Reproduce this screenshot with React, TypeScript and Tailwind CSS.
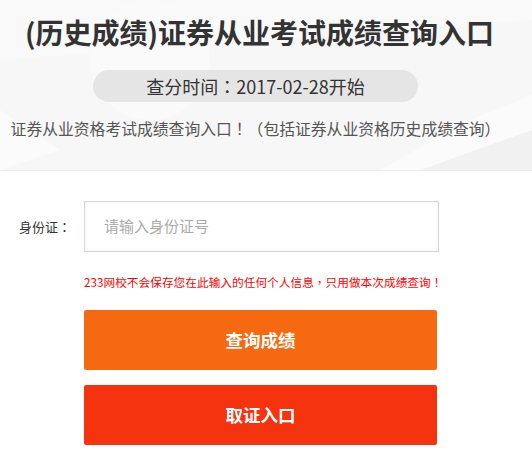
import React from "react";

const font = '"Noto Sans CJK SC", "Noto Sans", sans-serif';
const tc = '"Noto Sans CJK TC", "Noto Sans CJK SC", sans-serif';
const kr = '"Noto Sans CJK KR", "Noto Sans CJK SC", sans-serif';

function P({ c }: { c: string }) {
  return <span style={{ fontFamily: tc }}>{c}</span>;
}
function K({ c }: { c: string }) {
  return <span style={{ fontFamily: kr }}>{c}</span>;
}

export default function App() {
  return (
    <div className="w-[532px] h-[456px] bg-white overflow-hidden" style={{ fontFamily: font }}>
      <div className="relative h-[171px] bg-[#f7f7f7] border-b border-[#ebebeb] overflow-hidden">
        <svg className="absolute inset-0" width="532" height="170" viewBox="0 0 532 170">
          <polygon points="0,110 60,150 0,170" fill="#fbfbfb" />
          <polygon points="0,0 532,0 532,20 0,60" fill="#f9f9f9" />
          <circle cx="150" cy="60" r="60" fill="#fafafa" />
          <polygon points="420,170 532,130 532,170" fill="#f1f1f1" />
          <polygon points="380,170 470,120 532,95 532,130 420,170" fill="#fbfbfb" />
        </svg>
        <div className="relative w-[511px] flex flex-col items-center pt-[13px]">
          <h1 className="pl-[8px] text-[28px] leading-[38px] font-bold text-[#333] whitespace-nowrap">(历史成绩)证券从业考试成绩查询入口</h1>
          <div className="mt-[19px] w-[325px] h-[32px] rounded-full bg-[#e5e5e5] flex items-center justify-center text-[18px] text-[#333]">
            查分时间<P c="：" />2017-02-28开始
          </div>
          <p className="mt-[15px] text-[15.8px] leading-[24px] text-[#555] whitespace-nowrap">
            证券从业资格考试成绩查询入口<P c="！" /><K c="（" />包括证券从业资格历史成绩查询<K c="）" />
          </p>
        </div>
      </div>
      <div className="pt-[30px]">
        <div className="flex items-center">
          <label className="w-[84px] pl-[19px] text-[13px] text-[#333]">身份证<P c="：" /></label>
          <div className="w-[355px] h-[51px] border border-[#d6d6d6] bg-white shadow-[inset_0_0_4px_rgba(0,0,0,0.06)] flex items-center pl-[19px] text-[15px] text-[#aaa]">
            请输入身份证号
          </div>
        </div>
        <p className="ml-[84px] mt-[22px] text-[11.7px] leading-[16px] text-[#ff0000] whitespace-nowrap">
          233网校不会保存您在此输入的任何个人信息<P c="，" />只用做本次成绩查询<P c="！" />
        </p>
        <div className="ml-[84px] mt-[20px] flex flex-col gap-[15px] w-[353px]">
          <button className="h-[60px] rounded-[2px] bg-[#f56a10] text-white text-[17.5px] font-bold">查询成绩</button>
          <button className="h-[60px] rounded-[2px] bg-[#f5330f] text-white text-[17.5px] font-bold">取证入口</button>
        </div>
      </div>
    </div>
  );
}
